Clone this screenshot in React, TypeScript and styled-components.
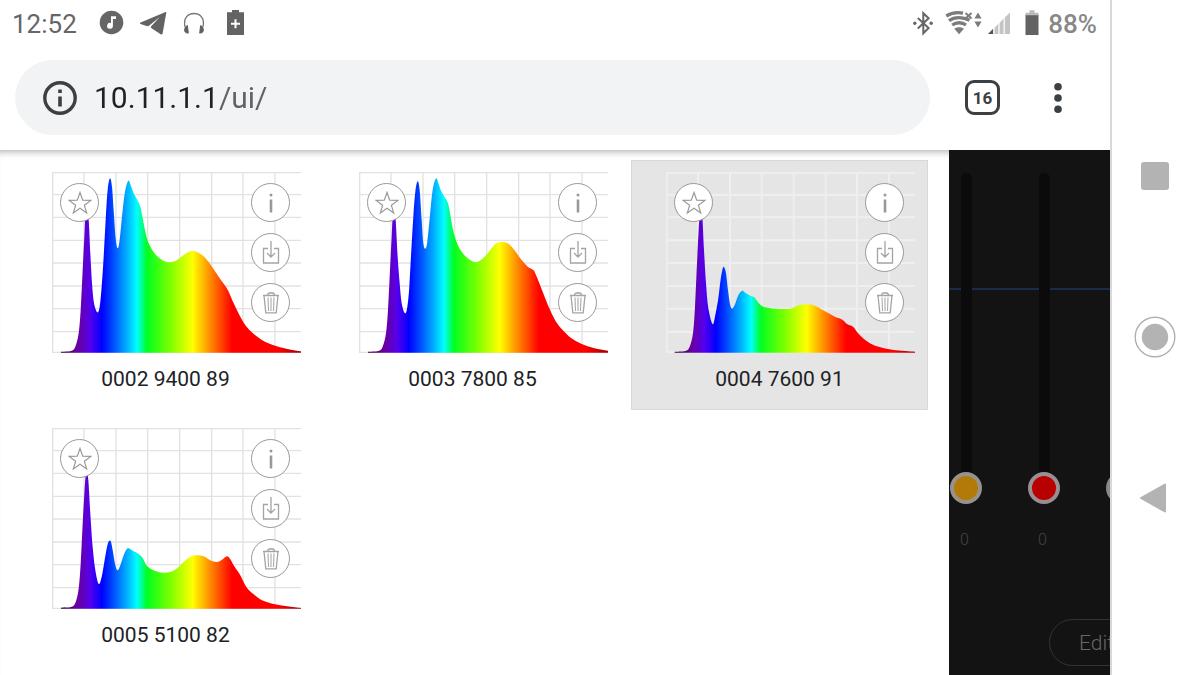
import React from "react";
import styled, { createGlobalStyle, css } from "styled-components";

const GlobalStyle = createGlobalStyle`
  *, *::before, *::after { box-sizing: border-box; }
  body {
    margin: 0;
    background: #fff;
    color: #202124;
    font-family: Roboto, "Liberation Sans", sans-serif;
  }
  button { font: inherit; cursor: pointer; }
`;

/* ---------- shell ---------- */

const Device = styled.div`
  display: flex;
  min-height: 100vh;
`;

const Screen = styled.div`
  flex: 1;
  min-width: 0;
  display: flex;
  flex-direction: column;
`;

const PlainButton = styled.button`
  display: flex;
  align-items: center;
  justify-content: center;
  flex: none;
  padding: 0;
  border: 0;
  background: none;
  color: inherit;
`;

/* ---------- status bar ---------- */

const StatusBar = styled.div`
  display: flex;
  align-items: center;
  justify-content: space-between;
  height: 46px;
  padding: 0 13px 0 12px;
  font-size: 26px;
  line-height: 32px;
  color: #666;
`;

const StatusGroup = styled.div<{ $gap: number }>`
  display: flex;
  align-items: center;
  gap: ${(p) => p.$gap}px;
  svg { display: block; flex: none; }
`;

const Clock = styled.time`
  width: 73px;
  padding-top: 2px;
`;

const BatteryLevel = styled.span`
  padding-top: 2px;
  font-weight: 500;
  color: #888;
`;

/* ---------- browser toolbar ---------- */

const Toolbar = styled.header`
  display: flex;
  align-items: center;
  height: 104px;
  padding: 0 42px 1px 15px;
`;

const AddressBar = styled.label`
  flex: 1;
  min-width: 0;
  display: flex;
  align-items: center;
  gap: 17px;
  height: 75px;
  margin-right: 35px;
  padding-left: 28px;
  border-radius: 38px;
  background: #f1f3f4;
  svg { flex: none; }
`;

const AddressInput = styled.input`
  flex: 1;
  min-width: 0;
  padding: 0;
  border: 0;
  outline: 0;
  height: 40px;
  font: 30px/40px Roboto, "Liberation Sans", sans-serif;
  color: #202124;
  background: linear-gradient(90deg, #202124 124px, #5f6368 124px);
  background-clip: text;
  -webkit-background-clip: text;
  -webkit-text-fill-color: transparent;
`;

const TabsButton = styled(PlainButton)`
  width: 35px;
  height: 35px;
  margin-right: 48px;
  border: 3px solid #3c4043;
  border-radius: 9px;
  font-size: 17px;
  font-weight: 700;
  line-height: 20px;
  color: #3c4043;
`;

const MenuButton = styled(PlainButton)`
  width: 20px;
  height: 40px;
`;

/* ---------- page ---------- */

const Page = styled.main`
  flex: 1;
  display: flex;
`;

const Presets = styled.section`
  flex: 1;
  min-width: 0;
  display: grid;
  grid-template-columns: repeat(auto-fill, 297px);
  align-content: start;
  gap: 6px 10px;
  padding: 10px 17px;
  box-shadow: inset 0 8px 7px -6px rgba(0, 0, 0, 0.3);
`;

const Card = styled.article<{ $selected?: boolean }>`
  height: 250px;
  padding: 11px 12px 0 34px;
  border: 1px solid transparent;
  ${(p) =>
    p.$selected &&
    css`
      background: #e5e5e5;
      border-color: #d8d8d8;
    `}
`;

const ChartArea = styled.div`
  position: relative;
  height: 181px;
  > svg { display: block; width: 100%; height: 100%; }
`;

const FavouriteSlot = styled.div`
  position: absolute;
  top: 11px;
  left: 8px;
`;

const ActionSlot = styled.div`
  position: absolute;
  top: 11px;
  right: 11px;
  display: grid;
  gap: 11px;
`;

const RoundButton = styled(PlainButton)`
  width: 39px;
  height: 39px;
  border: 1px solid #999;
  border-radius: 50%;
  background: #fff;
`;

const Caption = styled.h2`
  margin: 12px 22px 0 0;
  font-size: 21px;
  font-weight: 400;
  line-height: 28px;
  text-align: center;
`;

/* ---------- channel faders ---------- */

const Faders = styled.aside`
  flex: none;
  width: 161px;
  overflow: hidden;
  padding: 23px 0 0 1px;
  background: linear-gradient(#1b2c4a, #1b2c4a) 0 138px / 100% 2px no-repeat #131313;
  color: #666;
`;

const FaderRow = styled.div`
  display: flex;
  gap: 46px;
`;

const Channel = styled.label`
  flex: none;
  width: 32px;
  display: flex;
  flex-direction: column;
  align-items: center;
`;

const track = css`
  width: 11px;
  height: 100%;
  border-radius: 6px;
  background: #0b0b0b;
`;

const thumb = css<{ $color: string; $ring: string }>`
  width: 32px;
  height: 32px;
  border: 4px solid ${(p) => p.$ring};
  border-radius: 50%;
  background: ${(p) => p.$color};
`;

const Slider = styled.input<{ $color: string; $ring: string }>`
  appearance: none;
  writing-mode: vertical-lr;
  direction: rtl;
  width: 32px;
  height: 331px;
  margin: 0;
  background: none;
  &::-webkit-slider-runnable-track { ${track} }
  &::-webkit-slider-thumb {
    appearance: none;
    ${thumb}
    margin-left: -11px;
  }
  &::-moz-range-track { ${track} }
  &::-moz-range-thumb { ${thumb} }
`;

const Level = styled.output`
  margin: 26px 3px 0 0;
  font-size: 16px;
  font-weight: 300;
  line-height: 20px;
  color: #444;
`;

const EditButton = styled.button`
  height: 47px;
  margin: 69px 0 10px 99px;
  padding: 0 29px;
  border: 1px solid #333;
  border-radius: 24px;
  background: none;
  color: #666;
  font-size: 21px;
  font-weight: 300;
  line-height: 28px;
`;

/* ---------- system navigation ---------- */

const SystemNav = styled.nav`
  flex: none;
  width: 90px;
  display: flex;
  flex-direction: column;
  align-items: center;
  justify-content: center;
  gap: 119px;
  padding: 0 2px 2px 0;
  border-left: 2px solid #d8d8d8;
`;

const NavButton = styled(PlainButton)`
  width: 42px;
  height: 42px;
`;

/* ---------- icons ---------- */

const MusicIcon = () => (
  <svg width="28" height="28" viewBox="0 0 28 28" aria-hidden="true">
    <circle cx="13.5" cy="13.5" r="11.8" fill="#666" />
    <path d="M13 7.300h5v2.600h-3.100v6.900a2.900 2.900 0 1 1-1.900-2.700z" fill="#fff" />
  </svg>
);

const TelegramIcon = () => (
  <svg width="28" height="28" viewBox="0 0 28 28" aria-hidden="true">
    <path d="M26 3.200 1.600 13.400c-1 .4-1 1.300 0 1.700L7.500 17c1.100.3 2 .1 2.800-.6L21 7.700 12.200 17.300c-.6.700-.5 1.400.3 1.900l9.200 6c.9.600 1.700.3 1.900-.8L27.200 4.200c.2-1-.3-1.400-1.200-1z" fill="#636363" />
  </svg>
);

const HeadphonesIcon = () => (
  <svg width="28" height="28" viewBox="0 0 28 28" aria-hidden="true">
    <path d="M5 18C3 9 8 4.500 14 4.500S25 9 23 18" fill="none" stroke="#777" strokeWidth="1.300" />
    <path d="M7.400 16.600c-2.600.5-4.100 6.500-1 7.200l1.900.3zM20.600 16.600c2.600.5 4.100 6.500 1 7.200l-1.900.3z" fill="#5f5f5f" stroke="#5f5f5f" strokeLinejoin="round" />
  </svg>
);

const BatteryPlusIcon = () => (
  <svg width="28" height="28" viewBox="0 0 28 28" aria-hidden="true">
    <path d="M11 1h7v2.200h5V26H6V3.200h5z" fill="#636363" />
    <path d="M14.500 10.200v9M10 14.700h9" stroke="#fff" strokeWidth="2" />
  </svg>
);

const BluetoothIcon = () => (
  <svg width="26" height="26" viewBox="0 0 26 26" aria-hidden="true">
    <path d="M4.800 8 15.600 18 10.300 23.300V3.200L15.600 8.300 4.800 18.500" fill="none" stroke="#666" strokeWidth="2" />
    <circle cx="1.800" cy="13.200" r="1.700" fill="#666" />
    <circle cx="18.200" cy="13.200" r="1.700" fill="#666" />
  </svg>
);

const WifiIcon = () => (
  <svg width="37" height="26" viewBox="0 0 37 26" aria-hidden="true">
    <g fill="none" stroke="#7c7c7c" strokeWidth="3.300">
      <path d="M1.300 6C6 3 12.500 2 18 3.200" />
      <path d="M4 10.600C9.500 6.600 18 6.600 24.500 10.300" />
      <path d="M7.200 15c4-3 10-3 13.800 0" />
    </g>
    <path d="M9.300 18.800c2.600-2 7-2 9.600 0L14.100 24.200z" fill="#7c7c7c" />
    <path d="m20.500 3 6 5.500m0-5.500-6 5.500" stroke="#7c7c7c" strokeWidth="2" />
    <path d="m33 2.500 3.600 6h-7.200zM33 17.500l3.600-6h-7.200z" fill="#7c7c7c" />
  </svg>
);

const SignalIcon = () => (
  <svg width="28" height="26" viewBox="0 0 28 26" aria-hidden="true">
    <path d="M0 24 22 2.500V24z" fill="#c4c4c4" />
    <path d="M0 24 5 19v5z" fill="#555" />
    <path d="M6 16v9M11 11v14M16.200 6v19" stroke="#fff" strokeWidth="1.200" />
  </svg>
);

const BatteryIcon = () => (
  <svg width="20" height="28" viewBox="0 0 20 28" aria-hidden="true">
    <path d="M7.500 1.200h5v2.500h4v3h-13v-3h4z" fill="#bbb" />
    <path d="M3.500 6.200h13v19.800h-13z" fill="#636363" />
  </svg>
);

const SiteInfoIcon = () => (
  <svg width="34" height="34" viewBox="0 0 34 34" aria-hidden="true">
    <circle cx="17" cy="17" r="15.200" fill="none" stroke="#3c4043" strokeWidth="3.400" />
    <path d="M15.200 8.500h3.600V12h-3.600zM15.200 15.500h3.600v10h-3.600z" fill="#3c4043" />
  </svg>
);

const MoreIcon = () => (
  <svg width="10" height="32" viewBox="0 0 10 32" fill="#3c4043" aria-hidden="true">
    <circle cx="5" cy="4.800" r="3.800" />
    <circle cx="5" cy="16" r="3.800" />
    <circle cx="5" cy="27.200" r="3.800" />
  </svg>
);

const StarIcon = () => (
  <svg width="24" height="24" viewBox="0 0 24 24" aria-hidden="true">
    <path d="M12 1.500 14.700 9.200 22.900 9.400 16.400 14.300 18.700 22 12 17.300 5.300 22 7.600 14.300 1.100 9.400 9.300 9.200z" fill="none" stroke="#999" strokeWidth="1.200" />
  </svg>
);

const InfoIcon = () => (
  <svg width="24" height="24" viewBox="0 0 24 24" aria-hidden="true">
    <path d="M12 8.500V21.500" stroke="#999" strokeWidth="2.600" />
    <circle cx="12" cy="4" r="1.500" fill="#999" />
  </svg>
);

const SaveIcon = () => (
  <svg width="24" height="24" viewBox="0 0 24 24" fill="none" stroke="#a4a4a4" strokeWidth="1.300" aria-hidden="true">
    <path d="M9 7.500H4.500V22h15V7.500H15" />
    <path d="M12 0v16M8 12l4 4 4-4" />
  </svg>
);

const TrashIcon = () => (
  <svg width="24" height="24" viewBox="0 0 24 24" fill="none" aria-hidden="true">
    <path d="M4 4.500h16M5 4.500 6.800 21.800h10.400L19 4.500M8.500 4.300c0-3.400 7-3.400 7 0" stroke="#a4a4a4" strokeWidth="1.300" />
    <path d="M9 6.500 9.500 20M12 6.500V20M15 6.500 14.500 20" stroke="#aaa" strokeWidth="1.100" />
  </svg>
);

/* ---------- spectrum chart ---------- */

type Point = [number, number];

const W = 747;
const H = 543;

/* Catmull-Rom spline through the samples, closed along the base line. */
const areaPath = (pts: Point[]) => {
  let d = `M${pts[0][0]} ${H - 1}L${pts[0][0]} ${pts[0][1]}`;
  for (let i = 0; i < pts.length - 1; i++) {
    const a = pts[Math.max(0, i - 1)];
    const b = pts[i];
    const c = pts[i + 1];
    const e = pts[Math.min(pts.length - 1, i + 2)];
    d += `C${b[0] + (c[0] - a[0]) / 6} ${b[1] + (c[1] - a[1]) / 6} ${c[0] - (e[0] - b[0]) / 6} ${c[1] - (e[1] - b[1]) / 6} ${c[0]} ${c[1]}`;
  }
  return `${d}L${pts[pts.length - 1][0]} ${H - 1}Z`;
};

const stops: [number, string][] = [
  [27, "#300038"],
  [75, "#6a00a0"],
  [95, "#6000c0"],
  [115, "#5500f0"],
  [150, "#0000ff"],
  [192, "#0060ff"],
  [225, "#00b0ff"],
  [255, "#00ffff"],
  [285, "#00ff20"],
  [355, "#7dff00"],
  [422, "#ffff00"],
  [465, "#ffa000"],
  [540, "#ff0000"],
  [680, "#ff0000"],
  [747, "#a00000"],
];

const columns = [2, 96, 192, 287, 383, 479, 573, 669];
const rows = [2, 68, 136, 205, 273, 342, 410, 479, 541];

const Spectrum = ({ id, points, onGrey }: { id: string; points: Point[]; onGrey?: boolean }) => (
  <svg viewBox={`0 0 ${W} ${H}`} preserveAspectRatio="none" role="img" aria-label="Light spectrum">
    <defs>
      <linearGradient id={id} gradientUnits="userSpaceOnUse" x1="0" x2={W} y1="0" y2="0">
        {stops.map(([x, color]) => (
          <stop key={x} offset={x / W} stopColor={color} />
        ))}
      </linearGradient>
    </defs>
    <g stroke={onGrey ? "#efefef" : "#e2e2e2"} strokeWidth={onGrey ? 6 : 4}>
      {columns.map((x) => (
        <path key={x} d={`M${x} 0V${H}`} />
      ))}
      {rows.map((y) => (
        <path key={y} d={`M0 ${y}H${W}`} />
      ))}
    </g>
    <path d={areaPath(points)} fill={`url(#${id})`} />
  </svg>
);

interface Preset {
  name: string;
  selected?: boolean;
  points: Point[];
}

const presets: Preset[] = [
  {
    name: "0002 9400 89",
    points: [
      [27, 539], [57, 537], [70, 524], [80, 484], [86, 414], [92, 294], [97, 194], [100, 134], [104, 114], [110, 144],
      [115, 244], [120, 334], [126, 394], [136, 421], [143, 404], [149, 344], [155, 254], [161, 144], [167, 54], [174, 19],
      [180, 44], [185, 114], [191, 199], [197, 229], [203, 204], [211, 124], [219, 59], [229, 26], [237, 42], [245, 64],
      [257, 86], [265, 104], [272, 139], [280, 179], [290, 214], [310, 247], [330, 264], [350, 271], [370, 267], [390, 253],
      [405, 242], [422, 237], [440, 242], [460, 258], [480, 284], [500, 314], [520, 342], [530, 359], [545, 394], [565, 434],
      [585, 466], [610, 490], [635, 507], [665, 520], [705, 531], [747, 538],
    ],
  },
  {
    name: "0003 7800 85",
    points: [
      [27, 539], [58, 537], [71, 524], [81, 484], [87, 414], [93, 294], [98, 194], [101, 134], [105, 114], [110, 144],
      [116, 254], [122, 334], [128, 394], [138, 424], [145, 404], [151, 344], [157, 234], [163, 134], [169, 59], [176, 28],
      [182, 54], [188, 144], [193, 214], [199, 230], [205, 209], [213, 129], [221, 54], [231, 19], [239, 36], [246, 56],
      [258, 77], [267, 94], [274, 129], [281, 169], [289, 199], [301, 229], [321, 254], [346, 270], [366, 264], [386, 244],
      [406, 219], [425, 210], [446, 214], [466, 234], [486, 262], [506, 284], [523, 294], [531, 309], [551, 359], [571, 409],
      [591, 449], [616, 479], [641, 501], [676, 519], [716, 531], [747, 536],
    ],
  },
  {
    name: "0004 7600 91",
    selected: true,
    points: [
      [26, 539], [58, 537], [71, 524], [81, 484], [87, 404], [93, 274], [98, 174], [101, 134], [104, 114], [109, 134],
      [114, 234], [120, 334], [127, 409], [140, 457], [149, 424], [157, 379], [163, 329], [169, 294], [174, 285], [180, 304],
      [186, 354], [192, 396], [198, 410], [206, 399], [215, 374], [223, 361], [230, 356], [240, 364], [253, 371], [265, 376],
      [275, 389], [288, 402], [308, 408], [338, 411], [373, 410], [393, 402], [418, 397], [443, 400], [463, 410], [488, 424],
      [508, 435], [520, 439], [533, 446], [543, 456], [561, 464], [575, 482], [593, 500], [618, 517], [643, 526], [683, 534],
      [747, 539],
    ],
  },
  {
    name: "0005 5100 82",
    points: [
      [27, 539], [57, 537], [70, 525], [80, 482], [86, 407], [92, 287], [97, 197], [101, 142], [104, 127], [109, 157],
      [115, 257], [122, 357], [130, 427], [140, 468], [149, 447], [157, 402], [165, 357], [171, 339], [177, 342], [183, 372],
      [190, 412], [197, 427], [205, 412], [215, 382], [223, 365], [230, 361], [245, 370], [263, 380], [273, 392], [285, 414],
      [305, 427], [330, 434], [355, 432], [375, 421], [395, 402], [415, 386], [435, 382], [455, 385], [475, 397], [495, 402],
      [510, 395], [525, 385], [535, 394], [545, 412], [565, 442], [583, 477], [605, 499], [630, 517], [665, 528], [705, 535],
      [747, 540],
    ],
  },
];

const PresetCard = ({ name, points, selected }: Preset) => (
  <Card $selected={selected}>
    <ChartArea>
      <Spectrum id={`spectrum-${name.slice(0, 4)}`} points={points} onGrey={selected} />
      <FavouriteSlot>
        <RoundButton aria-label="Favourite"><StarIcon /></RoundButton>
      </FavouriteSlot>
      <ActionSlot>
        <RoundButton aria-label="Details"><InfoIcon /></RoundButton>
        <RoundButton aria-label="Save"><SaveIcon /></RoundButton>
        <RoundButton aria-label="Delete"><TrashIcon /></RoundButton>
      </ActionSlot>
    </ChartArea>
    <Caption>{name}</Caption>
  </Card>
);

interface ChannelInfo {
  name: string;
  color: string;
  ring: string;
  level?: number;
}

const channels: ChannelInfo[] = [
  { name: "Amber", color: "#b47a08", ring: "#96938c", level: 0 },
  { name: "Red", color: "#b80000", ring: "#998e92", level: 0 },
  { name: "White", color: "#999", ring: "#8a8a8a" },
];

export default function App() {
  return (
    <Device>
      <GlobalStyle />
      <Screen>
        <StatusBar>
          <StatusGroup $gap={13}>
            <Clock>12:52</Clock>
            <MusicIcon />
            <TelegramIcon />
            <HeadphonesIcon />
            <BatteryPlusIcon />
          </StatusGroup>
          <StatusGroup $gap={6}>
            <BluetoothIcon />
            <WifiIcon />
            <SignalIcon />
            <BatteryIcon />
            <BatteryLevel>88%</BatteryLevel>
          </StatusGroup>
        </StatusBar>
        <Toolbar>
          <AddressBar>
            <SiteInfoIcon />
            <AddressInput type="text" aria-label="Address" defaultValue="10.11.1.1/ui/" spellCheck={false} />
          </AddressBar>
          <TabsButton aria-label="Open tabs">16</TabsButton>
          <MenuButton aria-label="Menu"><MoreIcon /></MenuButton>
        </Toolbar>
        <Page>
          <Presets>
            {presets.map((p) => (
              <PresetCard key={p.name} {...p} />
            ))}
          </Presets>
          <Faders>
            <FaderRow>
              {channels.map((c) => (
                <Channel key={c.name}>
                  <Slider type="range" min={0} max={100} defaultValue={0} aria-label={c.name} $color={c.color} $ring={c.ring} />
                  {c.level !== undefined && <Level>{c.level}</Level>}
                </Channel>
              ))}
            </FaderRow>
            <EditButton>Edit</EditButton>
          </Faders>
        </Page>
      </Screen>
      <SystemNav>
        <NavButton aria-label="Recent apps">
          <svg width="28" height="28" viewBox="0 0 28 28"><rect width="28" height="28" rx="3" fill="#b3b3b3" /></svg>
        </NavButton>
        <NavButton aria-label="Home">
          <svg width="42" height="42" viewBox="0 0 42 42">
            <circle cx="21" cy="21" r="19.800" fill="none" stroke="#b0b0b0" strokeWidth="1.400" />
            <circle cx="21" cy="21" r="13.200" fill="#b3b3b3" />
          </svg>
        </NavButton>
        <NavButton aria-label="Back">
          <svg width="32" height="32" viewBox="0 0 32 32">
            <path d="M2 16 26 2.500V29.500z" fill="#b3b3b3" stroke="#b3b3b3" strokeWidth="2" strokeLinejoin="round" />
          </svg>
        </NavButton>
      </SystemNav>
    </Device>
  );
}
